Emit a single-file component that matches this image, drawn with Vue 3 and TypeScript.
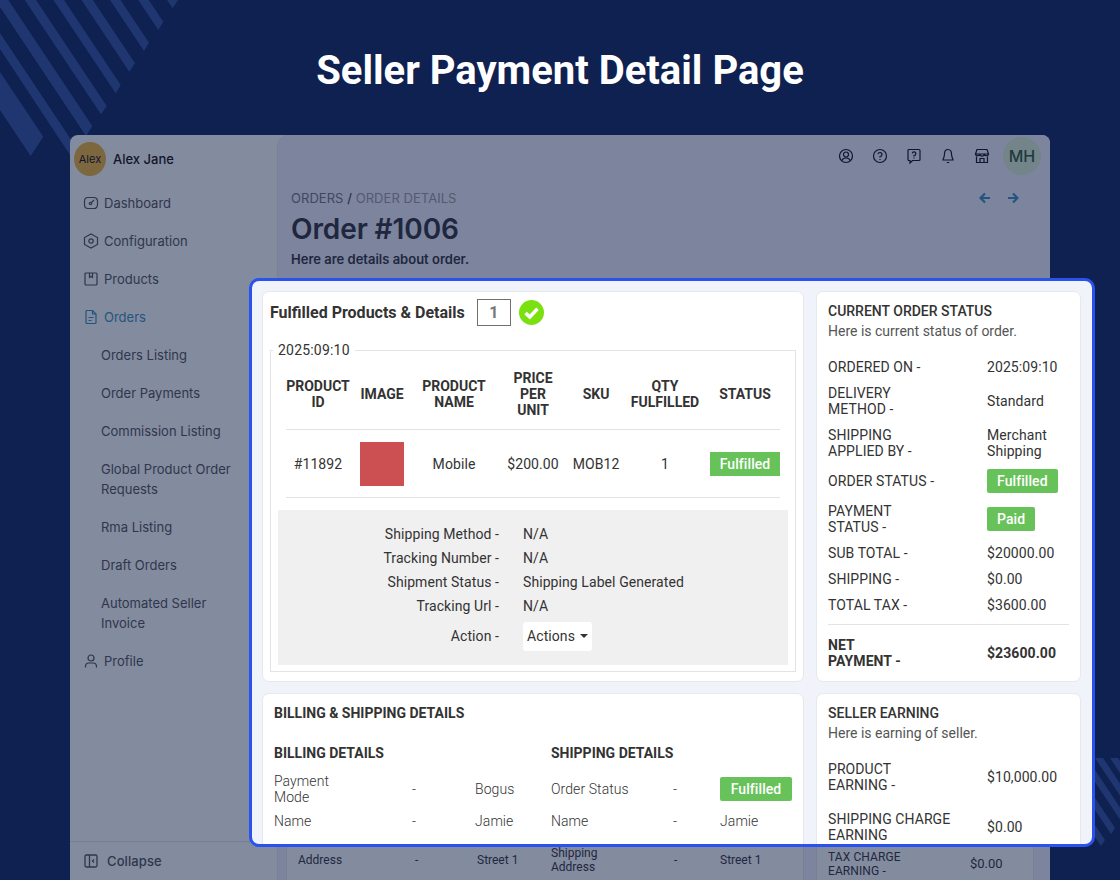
<script setup lang="ts">
const subItems = ['Orders Listing', 'Order Payments', 'Commission Listing', 'Global Product Order Requests', 'Rma Listing', 'Draft Orders', 'Automated Seller Invoice']

const headers = ['PRODUCT ID', 'IMAGE', 'PRODUCT NAME', 'PRICE PER UNIT', 'SKU', 'QTY FULFILLED', 'STATUS']

const tracking = [
  ['Shipping Method -', 'N/A'],
  ['Tracking Number -', 'N/A'],
  ['Shipment Status -', 'Shipping Label Generated'],
  ['Tracking Url -', 'N/A'],
]

const statusRows = [
  { label: 'ORDERED ON -', value: '2025:09:10' },
  { label: 'DELIVERY\nMETHOD -', value: 'Standard' },
  { label: 'SHIPPING\nAPPLIED BY -', value: 'Merchant\nShipping' },
  { label: 'ORDER STATUS -', badge: 'Fulfilled' },
  { label: 'PAYMENT\nSTATUS -', badge: 'Paid' },
  { label: 'SUB TOTAL -', value: '$20000.00' },
  { label: 'SHIPPING -', value: '$0.00' },
  { label: 'TOTAL TAX -', value: '$3600.00' },
]

const earningRows = [
  { label: 'PRODUCT\nEARNING -', value: '$10,000.00' },
  { label: 'SHIPPING CHARGE\nEARNING', value: '$0.00' },
]
</script>

<template>
  <div class="page">
    <svg class="deco deco-tl" width="180" height="160" viewBox="0 0 180 160" aria-hidden="true">
      <g fill="#1f3670">
        <path d="M167 0H178L172.700 8.300Z" />
        <path d="M138.300 0H148.800L163.300 21.700 158.300 30Z" />
        <path d="M110 0H120.500L149 42.700 144 51Z" />
        <path d="M81.500 0H92.800L135 63.300 129.300 71.700Z" />
        <path d="M53.500 0H64L120.700 85 115.700 93.300Z" />
        <path d="M24.800 0H36L106.700 106 101 114.300Z" />
        <path d="M0 7V0H8.300L92.300 126 86 136Z" />
        <path d="M0 33 78 150 72 158 0 49Z" />
        <path d="M0 72 43.300 136.700 30.700 156 0 110Z" />
      </g>
    </svg>
    <svg class="deco deco-br" width="26" height="100" viewBox="0 0 26 100" aria-hidden="true">
      <g fill="#1f3670">
        <path d="M16 1H24L26 4V16Z" />
        <path d="M1 1H9L26 26.500V38.500Z" />
        <path d="M0 11.500 26 50.500V62.500L0 23.500Z" />
        <path d="M0 39.500 21 71 17 77 0 51.500Z" />
        <path d="M0 66.500 11 83 7 89 0 78.500Z" />
      </g>
    </svg>

    <h1 class="title">Seller Payment Detail Page</h1>

    <div class="window">
      <aside class="sidebar">
        <div class="user">
          <span class="avatar">Alex</span>
          <span class="user-name">Alex Jane</span>
        </div>
        <nav class="nav">
          <a class="nav-item">
            <svg class="ni" viewBox="0 0 16 16" fill="none" stroke="currentColor" stroke-width="1.2">
              <path d="M5 2.500h6A3.500 3.500 0 0 1 14.500 6v4a3.500 3.500 0 0 1-3.500 3.500H5A3.500 3.500 0 0 1 1.500 10V6A3.500 3.500 0 0 1 5 2.500Z" />
              <circle cx="7.500" cy="8.500" r="1.200" />
              <path d="M8.500 7.500 11 5" />
            </svg>
            Dashboard
          </a>
          <a class="nav-item">
            <svg class="ni" viewBox="0 0 16 16" fill="none" stroke="currentColor" stroke-width="1.200">
              <path d="M8 1 14.500 4.500v7L8 15 1.500 11.500v-7Z" />
              <circle cx="8" cy="8" r="2.200" />
            </svg>
            Configuration
          </a>
          <a class="nav-item">
            <svg class="ni" viewBox="0 0 16 16" fill="none" stroke="currentColor" stroke-width="1.200">
              <rect x="2" y="2" width="12" height="12" rx="1" />
              <path d="M6.500 2v4.500L8 5.500l1.500 1V2" />
            </svg>
            Products
          </a>
          <a class="nav-item active">
            <svg class="ni" viewBox="0 0 16 16" fill="none" stroke="currentColor" stroke-width="1.200">
              <path d="M4 1.500h5.500L13 5v8.500a1 1 0 0 1-1 1H4a1 1 0 0 1-1-1v-11a1 1 0 0 1 1-1Z" />
              <path d="M9.500 1.500V5H13M5.500 8.500h5M5.500 11.500h3" />
            </svg>
            Orders
          </a>
          <a v-for="s in subItems" :key="s" class="sub-item">{{ s }}</a>
          <a class="nav-item profile">
            <svg class="ni" viewBox="0 0 16 16" fill="none" stroke="currentColor" stroke-width="1.200">
              <circle cx="8" cy="5" r="3" />
              <path d="M2.500 14.500v-1A3.500 3.500 0 0 1 6 10h4a3.500 3.500 0 0 1 3.500 3.500v1" />
            </svg>
            Profile
          </a>
        </nav>
        <div class="collapse">
          <svg class="ni" viewBox="0 0 16 16" fill="none" stroke="currentColor" stroke-width="1.300">
            <rect x="2" y="2" width="12" height="12" rx="1.500" />
            <path d="M6.500 2v12" />
            <path d="M11 6.500 9.500 8 11 9.500" />
          </svg>
          Collapse
        </div>
      </aside>

      <main class="main">
        <div class="topbar">
          <svg class="ti" viewBox="0 0 16 16" fill="none" stroke="currentColor" stroke-width="1.200">
            <circle cx="8" cy="8" r="6.500" />
            <circle cx="8" cy="6.500" r="2.500" />
            <path d="M4 12.500c.5-2 2-2.500 4-2.500s3.500.5 4 2.500" />
          </svg>
          <svg class="ti" viewBox="0 0 16 16" fill="none" stroke="currentColor" stroke-width="1.200">
            <circle cx="8" cy="8" r="6.500" />
            <path d="M6 6.300A2 2 0 1 1 8 8.500v1M8 11v1" />
          </svg>
          <svg class="ti" viewBox="0 0 16 16" fill="none" stroke="currentColor" stroke-width="1.200">
            <path d="M3 1.500h10a1 1 0 0 1 1 1v9a1 1 0 0 1-1 1H6.500L4 15v-2.500H3a1 1 0 0 1-1-1v-9a1 1 0 0 1 1-1Z" />
            <path d="M6.300 5.500A1.800 1.800 0 1 1 8 7.500v1M8 9.500v1" />
          </svg>
          <svg class="ti" viewBox="0 0 16 16" fill="none" stroke="currentColor" stroke-width="1.200">
            <path d="M8 1.500c-2.500 0-3.500 2-3.500 4.500 0 3-1.500 5-1.500 6h10c0-1-1.500-3-1.500-6 0-2.500-1-4.500-3.500-4.500Z" />
            <path d="M6.800 14.500h2.400" />
          </svg>
          <svg class="ti" viewBox="0 0 16 16" fill="none" stroke="currentColor" stroke-width="1.200">
            <path d="M3 1.500h10L14.500 6h-13Z" />
            <path d="M1.500 6a2.200 2.200 0 0 0 4.300 0 2.200 2.200 0 0 0 4.400 0 2.200 2.200 0 0 0 4.300 0" />
            <path d="M2.500 8.500v6h11v-6M6 14.500v-4h4v4" />
          </svg>
          <span class="mh">MH</span>
        </div>
        <div class="heading">
          <div class="crumbs-row">
            <div class="crumbs"><span>ORDERS</span> <b>/</b> <span class="crumb-cur">ORDER DETAILS</span></div>
            <div class="arrows">
              <svg width="12" height="12" viewBox="0 0 12 12" fill="none" stroke="currentColor" stroke-width="2.200">
                <path d="M11 6H2M6 1.500 1.500 6 6 10.500" />
              </svg>
              <svg width="12" height="12" viewBox="0 0 12 12" fill="none" stroke="currentColor" stroke-width="2.200">
                <path d="M1 6h9M6 1.500 10.500 6 6 10.500" />
              </svg>
            </div>
          </div>
          <div class="order-title">Order #1006</div>
          <div class="order-sub">Here are details about order.</div>
        </div>
        <div class="under">
          <div class="under-left">
            <div class="under-row">
              <span class="u-a">Address</span><span class="u-b">-</span><span class="u-c">Street 1</span>
              <span class="u-d">Shipping<br />Address</span><span class="u-e">-</span><span>Street 1</span>
            </div>
          </div>
          <div class="under-right">
            <span class="u-tax">TAX CHARGE<br />EARNING -</span><span>$0.00</span>
          </div>
        </div>
      </main>
    </div>

    <section class="panel">
      <div class="panel-grid">
        <div class="card products">
          <div class="prod-head">
            <span class="prod-title">Fulfilled Products &amp; Details</span>
            <span class="count">1</span>
            <svg width="25" height="25" viewBox="0 0 25 25">
              <circle cx="12.500" cy="12.500" r="12.500" fill="#7ae00f" />
              <path d="M6.500 13 10.800 17 18.500 8.800" fill="none" stroke="#fff" stroke-width="3.600" />
            </svg>
          </div>
          <fieldset class="fs">
            <legend>2025:09:10</legend>
            <table class="tbl">
              <colgroup>
                <col class="c1" /><col class="c2" /><col class="c3" /><col class="c4" /><col class="c5" /><col class="c6" /><col class="c7" />
              </colgroup>
              <thead>
                <tr><th v-for="h in headers" :key="h">{{ h }}</th></tr>
              </thead>
              <tbody>
                <tr>
                  <td>#11892</td>
                  <td><span class="thumb"></span></td>
                  <td>Mobile</td>
                  <td>$200.00</td>
                  <td>MOB12</td>
                  <td>1</td>
                  <td><span class="badge square">Fulfilled</span></td>
                </tr>
              </tbody>
            </table>
            <div class="tracking">
              <div v-for="t in tracking" :key="t[0]" class="track-row">
                <span class="track-label">{{ t[0] }}</span>
                <span>{{ t[1] }}</span>
              </div>
              <div class="track-row action">
                <span class="track-label">Action -</span>
                <span class="btn">Actions<i class="caret"></i></span>
              </div>
            </div>
          </fieldset>
        </div>

        <div class="card side status-card">
          <div class="side-title">CURRENT ORDER STATUS</div>
          <div class="side-sub">Here is current status of order.</div>
          <div class="kv-list">
            <div v-for="r in statusRows" :key="r.label" class="kv">
              <span class="k">{{ r.label }}</span>
              <span v-if="r.value" class="v">{{ r.value }}</span>
              <span v-else class="badge">{{ r.badge }}</span>
            </div>
          </div>
          <div class="kv net">
            <span class="k">NET{{ '\n' }}PAYMENT -</span>
            <span class="v">$23600.00</span>
          </div>
        </div>

        <div class="card billing">
          <div class="bill-title">BILLING &amp; SHIPPING DETAILS</div>
          <div class="bill-grid">
            <div class="bill-col">
              <div class="bill-head">BILLING DETAILS</div>
              <div class="bill-row tall">
                <span class="pm">Payment Mode</span><span>-</span><span class="end">Bogus</span>
              </div>
              <div class="bill-row">
                <span>Name</span><span>-</span><span class="end">Jamie</span>
              </div>
            </div>
            <div class="bill-col right">
              <div class="bill-head">SHIPPING DETAILS</div>
              <div class="bill-row tall">
                <span>Order Status</span><span>-</span><span class="badge wide">Fulfilled</span>
              </div>
              <div class="bill-row">
                <span>Name</span><span>-</span><span>Jamie</span>
              </div>
            </div>
          </div>
        </div>

        <div class="card side earning-card">
          <div class="side-title">SELLER EARNING</div>
          <div class="side-sub">Here is earning of seller.</div>
          <div class="earn-list">
            <div v-for="r in earningRows" :key="r.label" class="kv earn">
              <span class="k">{{ r.label }}</span>
              <span class="v">{{ r.value }}</span>
            </div>
          </div>
        </div>
      </div>
    </section>
  </div>
</template>

<style>
html, body { margin: 0; background: #0f2150; }
</style>

<style scoped>
.page {
  position: relative;
  width: 1120px;
  height: 880px;
  overflow: hidden;
  background: #0f2150;
  font-family: Roboto, sans-serif;
  color: #333;
}
.deco { position: absolute; }
.deco-tl { left: 0; top: 0; }
.deco-br { left: 1094px; top: 757px; }
.title {
  margin: 0;
  padding-top: 47px;
  height: 135px;
  box-sizing: border-box;
  text-align: center;
  font-size: 40px;
  line-height: 48px;
  font-weight: 700;
  color: #fff;
  position: relative;
}

.window {
  position: relative;
  display: flex;
  width: 980px;
  height: 745px;
  margin-left: 70px;
  border-radius: 8px 8px 0 0;
  overflow: hidden;
  background: #838b9e;
  font-family: Inter, sans-serif;
}
.sidebar {
  position: relative;
  width: 207px;
  flex: none;
  display: flex;
  flex-direction: column;
}
.user {
  display: flex;
  align-items: center;
  gap: 7px;
  padding: 7px 0 0 4px;
  height: 34px;
}
.avatar {
  width: 32px;
  height: 34px;
  border-radius: 50%;
  background: #7d673f;
  color: #10162c;
  font-size: 11px;
  display: flex;
  align-items: center;
  justify-content: center;
}
.user-name { font-size: 13px; font-weight: 500; color: #10162c; }
.nav { display: flex; flex-direction: column; padding-top: 8px; }
.nav-item {
  display: flex;
  align-items: center;
  gap: 5px;
  height: 38px;
  padding-left: 13px;
  font-size: 13px;
  color: #2f364d;
}
.nav-item.active { color: #24557f; }
.ni { width: 16px; height: 16px; flex: none; }
.sub-item {
  display: block;
  width: 140px;
  padding: 9px 0 9px 31px;
  font-size: 13px;
  line-height: 20px;
  color: #2f364d;
}
.collapse {
  position: absolute;
  left: 0;
  right: 0;
  bottom: 0;
  height: 39px;
  box-sizing: border-box;
  border-top: 1px solid #777f93;
  display: flex;
  align-items: center;
  gap: 8px;
  padding-left: 13px;
  font-size: 13px;
  font-weight: 500;
  letter-spacing: 0.1px;
  color: #2f364d;
}

.main {
  position: relative;
  flex: 1;
  background: #7d849d;
  border-radius: 12px 0 0 0;
  border-left: 1px solid #787f97;
  display: flex;
  flex-direction: column;
}
.topbar {
  display: flex;
  justify-content: flex-end;
  align-items: center;
  height: 41px;
  padding-right: 9px;
  color: #10162c;
  gap: 18px;
}
.ti { width: 16px; height: 16px; }
.mh {
  width: 38px;
  height: 38px;
  margin-left: -5px;
  border-radius: 50%;
  background: #748589;
  color: #203a3f;
  font-size: 16px;
  font-weight: 500;
  display: flex;
  align-items: center;
  justify-content: center;
}
.heading { padding: 12px 31px 0 13px; }
.crumbs-row { display: flex; justify-content: space-between; align-items: center; }
.crumbs { font-size: 13px; line-height: 20px; letter-spacing: 0.05px; color: #3f4860; }
.crumbs b { font-weight: 400; color: #1f2740; }
.crumb-cur { color: #535a70; }
.arrows { display: flex; gap: 16px; color: #24557f; }
.order-title {
  margin-top: 3px;
  font-size: 28px;
  line-height: 36px;
  font-weight: 600;
  letter-spacing: -0.1px;
  color: #1f2740;
}
.order-sub {
  margin-top: 2px;
  font-size: 13px;
  line-height: 20px;
  font-weight: 600;
  color: #1f2740;
}
.under {
  position: absolute;
  left: 0;
  right: 0;
  top: 700px;
  height: 45px;
  font-family: Roboto, sans-serif;
  font-size: 12px;
  color: #1f2740;
}
.under-left, .under-right {
  position: absolute;
  top: 0;
  bottom: 0;
  box-sizing: border-box;
  background: #838b9e;
  border-left: 1px solid #787f97;
  border-right: 1px solid #787f97;
}
.under-left { left: 8px; width: 518px; }
.under-right {
  left: 538px;
  width: 218px;
  display: flex;
  align-items: center;
  padding: 13px 0 0 11px;
  line-height: 14px;
  font-size: 13px;
}
.u-tax { width: 142px; font-weight: 400; font-size: 12px; letter-spacing: 0.1px; }
.under-row {
  position: absolute;
  left: 11px;
  top: 13px;
  display: flex;
  align-items: center;
  height: 24px;
  line-height: 14px;
  white-space: nowrap;
}
.u-a { width: 117px; }
.u-b { width: 62px; }
.u-c { width: 74px; }
.u-d { width: 123px; }
.u-e { width: 46px; }

.panel {
  position: absolute;
  left: 249px;
  top: 278px;
  width: 846px;
  height: 569px;
  box-sizing: border-box;
  border: 3px solid #2952ee;
  border-radius: 10px;
  background: #f0f3f9;
  overflow: hidden;
  font-size: 14px;
  letter-spacing: 0.08px;
}
.panel-grid {
  display: grid;
  grid-template-columns: 542px 265px;
  grid-template-rows: 391px 200px;
  column-gap: 12px;
  row-gap: 11px;
  padding: 10px 0 0 10px;
}
.card {
  box-sizing: border-box;
  background: #fff;
  border: 1px solid #e6e8ec;
  border-radius: 7px;
}
.products { padding: 7px 7px 0 7px; }
.prod-head { display: flex; align-items: center; height: 27px; }
.prod-title { font-size: 16px; font-weight: 700; color: #333; width: 207px; white-space: nowrap; letter-spacing: 0; }
.count {
  box-sizing: border-box;
  width: 34px;
  height: 27px;
  border: 1px solid #707070;
  display: flex;
  align-items: center;
  justify-content: center;
  font-size: 16px;
  font-weight: 700;
  color: #777;
  margin-right: 8px;
}
.fs {
  margin: 16px 0 0;
  padding: 0 7px 7px;
  border: 1px solid #e3e3e3;
  min-width: 0;
  height: 330px;
  box-sizing: border-box;
  position: relative;
}
.fs legend {
  margin-left: -5px;
  padding: 0 5px;
  font-size: 14px;
  line-height: 16px;
  letter-spacing: 0.2px;
  color: #333;
}
.tbl {
  table-layout: fixed;
  border-collapse: collapse;
  width: 494px;
  margin: 0 0 0 8px;
}
.c1 { width: 64px; } .c2 { width: 64px; } .c3 { width: 80px; } .c4 { width: 78px; }
.c5 { width: 48px; } .c6 { width: 90px; } .c7 { width: 70px; }
.tbl th {
  height: 71px;
  padding: 0;
  font-size: 14px;
  line-height: 16px;
  font-weight: 700;
  color: #333;
  text-align: center;
  border-bottom: 1px solid #e3e3e3;
  letter-spacing: 0;
}
.tbl th:nth-child(4) { padding: 0 14px; }
.tbl td {
  height: 67px;
  padding: 0;
  text-align: center;
  font-size: 14px;
  color: #333;
  border-bottom: 1px solid #e3e3e3;
}
.thumb { display: block; width: 44px; height: 44px; margin: 0 auto; background: #cc5051; }
.badge {
  display: inline-block;
  box-sizing: border-box;
  height: 24px;
  padding: 0 10px;
  line-height: 24px;
  background: #68c25a;
  color: #fff;
  font-size: 14px;
  font-weight: 500;
  text-align: center;
  border-radius: 2px;
  justify-self: start;
}
.square { border-radius: 0; width: 70px; padding: 0; }
.wide { width: 72px; padding: 0; }
.tracking {
  margin-top: 12px;
  background: #f0f0f0;
  height: 155px;
  box-sizing: border-box;
  padding-top: 12px;
}
.track-row {
  display: grid;
  grid-template-columns: 221px 1fr;
  column-gap: 24px;
  align-items: center;
  height: 24px;
  font-size: 14px;
  color: #333;
}
.track-label { text-align: right; }
.track-row.action { height: 36px; }
.btn {
  display: inline-flex;
  align-items: center;
  justify-content: center;
  justify-self: start;
  width: 69px;
  height: 29px;
  background: #fff;
  border-radius: 3px;
}
.caret {
  width: 0;
  height: 0;
  margin-left: 5px;
  border-left: 4px solid transparent;
  border-right: 4px solid transparent;
  border-top: 4px solid #333;
}

.side { padding: 11px 11px 0; }
.side-title { font-size: 14px; line-height: 16px; font-weight: 500; color: #333; letter-spacing: 0; }
.side-sub { margin-top: 4px; font-size: 14px; line-height: 16px; color: #555; letter-spacing: 0; }
.kv-list { margin-top: 15px; border-bottom: 1px solid #e3e3e3; padding-bottom: 6px; }
.kv {
  display: grid;
  grid-template-columns: 159px 1fr;
  align-items: center;
  padding: 5px 0;
  line-height: 16px;
  font-size: 14px;
  color: #333;
}
.k, .v { white-space: pre-line; }
.net { margin-top: 7px; font-weight: 700; }
.earn-list { margin-top: 11px; }
.earn { padding: 9px 0; }

.billing { padding: 11px 11px 0; }
.bill-title { font-size: 14px; line-height: 16px; font-weight: 700; color: #333; letter-spacing: 0; }
.bill-grid {
  display: grid;
  grid-template-columns: 277px 241px;
  margin-top: 24px;
}
.bill-head { font-size: 14px; line-height: 16px; font-weight: 700; color: #333; margin-bottom: 8px; letter-spacing: 0; }
.bill-row {
  display: grid;
  grid-template-columns: 138px 63px 1fr;
  align-items: center;
  line-height: 16px;
  height: 24px;
  color: #333;
  font-weight: 300;
}
.bill-row.tall { height: 40px; }
.right .bill-row { grid-template-columns: 122px 47px 1fr; }
.pm { width: 60px; }
.end { text-align: left; }
</style>
